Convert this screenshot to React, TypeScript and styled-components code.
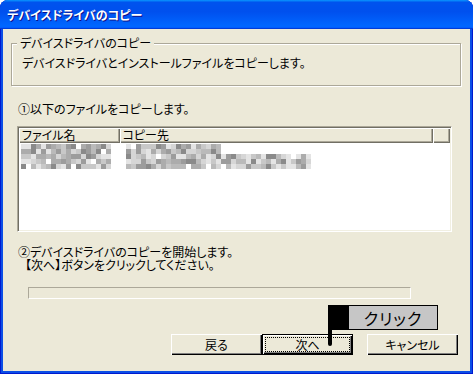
import { createGlobalStyle, styled } from 'styled-components';

const UI_FONT = `'MS UI Gothic', 'Noto Sans CJK JP', 'Noto Sans', sans-serif`;

const GlobalStyle = createGlobalStyle`
  html, body {
    margin: 0;
    padding: 0;
    background: #ffffff;
  }
  body {
    font-family: ${UI_FONT};
    font-size: 12px;
    font-feature-settings: 'palt';
    color: #000000;
  }
`;

const GREYS = ['#8a8a8a', '#9c9c9c', '#acacac', '#bababa', '#c8c8c8', '#d6d6d6', '#e4e4e4'];

// blurred (mosaic) file names, drawn as pixel blocks
const Mosaic: React.FC<{ cols: number; rows: number; seed: number; cell?: number }> = ({
  cols,
  rows,
  seed,
  cell = 5,
}) => {
  let s = seed;
  const next = () => {
    s = (s * 9301 + 49297) % 233280;
    return s / 233280;
  };
  const rects = [];
  for (let r = 0; r < rows; r++) {
    for (let c = 0; c < cols; c++) {
      const v = next();
      if (v > 0.93) continue;
      rects.push(
        <rect key={`${r}-${c}`} x={c * cell} y={r * cell} width={cell} height={cell} fill={GREYS[Math.floor(v * 7.5) % 7]} />,
      );
    }
  }
  return (
    <svg width={cols * cell} height={rows * cell} style={{ display: 'block' }} shapeRendering="crispEdges">
      {rects}
    </svg>
  );
};

const App = () => {
  return (
    <>
      <GlobalStyle />
      <StWindow>
        <StTitleBar>デバイスドライバのコピー</StTitleBar>
        <StClient>
          <StGroupBox>
            <StGroupTitle>デバイスドライバのコピー</StGroupTitle>
            <StText>デバイスドライバとインストールファイルをコピーします。</StText>
          </StGroupBox>

          <StStep $top={16}>①以下のファイルをコピーします。</StStep>

          <StListView>
            <StHeader>
              <StHeaderCell $width={101}>ファイル名</StHeaderCell>
              <StHeaderCell $width={315}>コピー先</StHeaderCell>
              <StHeaderCell $width={17} />
            </StHeader>
            <StListRow>
              <StNameCell>
                <Mosaic cols={18} rows={5} seed={17} />
              </StNameCell>
              <StDestCell>
                <Mosaic cols={19} rows={2} seed={41} />
                <Mosaic cols={37} rows={3} seed={73} />
              </StDestCell>
            </StListRow>
          </StListView>

          <StStep $top={13}>
            ②デバイスドライバのコピーを開始します。
            <StIndent>【次へ】ボタンをクリックしてください。</StIndent>
          </StStep>

          <StProgress />

          <StButtonRow>
            <StButton>戻る</StButton>
            <StButton $default>
              <StFocus>次へ</StFocus>
            </StButton>
            <StButton $gap={14}>キャンセル</StButton>
          </StButtonRow>

          <StCallout>
            <StCalloutTab />
            <StCalloutLabel>クリック</StCalloutLabel>
            <StCalloutStem />
          </StCallout>
        </StClient>
      </StWindow>
    </>
  );
};

const StWindow = styled.div`
  width: 473px;
  height: 374px;
  display: flex;
  flex-direction: column;
  background: #0b4ee6;
  border-radius: 8px 8px 0 0;
  overflow: hidden;
  box-shadow: inset 1px 0 #0019cf, inset -1px 0 #0019cf, inset 0 -1px #0019cf;
`;

const StTitleBar = styled.div`
  height: 29px;
  flex-shrink: 0;
  display: flex;
  align-items: center;
  padding: 0 0 1px 7px;
  box-sizing: border-box;
  background: linear-gradient(
    180deg,
    #0997ff,
    #0053ee 8%,
    #0050ee 40%,
    #0066ff 88%,
    #0066ff 93%,
    #005bff 95%,
    #003dd7 96%,
    #003dd7
  );
  color: #ffffff;
  font-weight: bold;
  font-size: 12px;
  text-shadow: 1px 1px #0f1089;
`;

const StClient = styled.div`
  position: relative;
  flex: 1;
  margin: 0 3px 3px;
  background: #ece9d8;
  display: flex;
  flex-direction: column;
  align-items: flex-start;
`;

const StGroupBox = styled.div`
  position: relative;
  margin: 14px 0 0 8px;
  width: 450px;
  height: 43px;
  box-sizing: border-box;
  padding: 13px 10px 0;
  border: 1px solid #aca899;
  box-shadow: inset 1px 1px 0 #ffffff, 1px 1px 0 #ffffff;
`;

const StGroupTitle = styled.span`
  position: absolute;
  top: -7px;
  left: 5px;
  padding: 0 3px;
  line-height: 12px;
  background: #ece9d8;
`;

const StText = styled.div`
  line-height: 12px;
  white-space: nowrap;
`;

const StStep = styled.div<{ $top: number }>`
  margin: ${(p) => p.$top}px 0 0 15px;
  line-height: 13px;
  white-space: nowrap;
`;

const StIndent = styled.div`
  padding-left: 7px;
`;

const StListView = styled.div`
  margin: 11px 0 0 14px;
  width: 435px;
  height: 106px;
  box-sizing: border-box;
  padding: 1px;
  background: #ffffff;
  border-top: 1px solid #aca899;
  border-left: 1px solid #aca899;
  border-right: 1px solid #ffffff;
  border-bottom: 1px solid #ffffff;
  box-shadow: inset 1px 1px #716f64, inset -1px -1px #f1efe2;
`;

const StHeader = styled.div`
  display: flex;
  height: 15px;
`;

const StHeaderCell = styled.div<{ $width: number }>`
  width: ${(p) => p.$width}px;
  box-sizing: border-box;
  padding: 1px 0 0 3px;
  line-height: 12px;
  background: #ece9d8;
  box-shadow: inset 1px 1px #ffffff, inset -1px -1px #716f64, inset -2px -2px #aca899;
  white-space: nowrap;
`;

const StListRow = styled.div`
  display: flex;
  padding-top: 1px;
`;

const StNameCell = styled.div`
  width: 101px;
  padding-left: 2px;
  box-sizing: border-box;
`;

const StDestCell = styled.div`
  display: flex;
  flex-direction: column;
  padding-left: 6px;
`;

const StProgress = styled.div`
  margin: 16px 0 0 25px;
  width: 383px;
  height: 12px;
  box-sizing: border-box;
  border-top: 1px solid #aca899;
  border-left: 1px solid #aca899;
  border-right: 1px solid #ffffff;
  border-bottom: 1px solid #ffffff;
`;

const StButtonRow = styled.div`
  display: flex;
  margin: 35px 0 0 168px;
`;

const StButton = styled.div<{ $default?: boolean; $gap?: number }>`
  width: 91px;
  height: 21px;
  box-sizing: border-box;
  margin-left: ${(p) => p.$gap ?? 0}px;
  display: flex;
  align-items: center;
  justify-content: center;
  background: #ece9d8;
  line-height: 12px;
  box-shadow: ${(p) =>
    p.$default
      ? 'inset 0 0 0 1px #000000, inset 1px 1px 0 1px #ffffff, inset -1px -1px 0 1px #000000, inset -2px -2px 0 1px #808080'
      : 'inset 1px 1px #ffffff, inset -1px -1px #000000, inset -2px -2px #808080'};
`;

const StFocus = styled.div`
  width: 83px;
  height: 13px;
  display: flex;
  align-items: center;
  justify-content: center;
  outline: 1px dotted #000000;
`;

const StCallout = styled.div`
  position: absolute;
  left: 325px;
  top: 276px;
  display: flex;
  height: 25px;
`;

const StCalloutTab = styled.div`
  width: 21px;
  background: #000000;
`;

const StCalloutLabel = styled.div`
  width: 89px;
  box-sizing: border-box;
  border: 1px solid #000000;
  border-left: none;
  background: #c6c6c6;
  display: flex;
  align-items: center;
  justify-content: center;
  font-size: 16px;
  letter-spacing: 1px;
`;

const StCalloutStem = styled.div`
  position: absolute;
  left: 0;
  top: 25px;
  width: 4px;
  height: 16px;
  background: #000000;
  border-radius: 0 0 2px 2px;
`;

export default App;
